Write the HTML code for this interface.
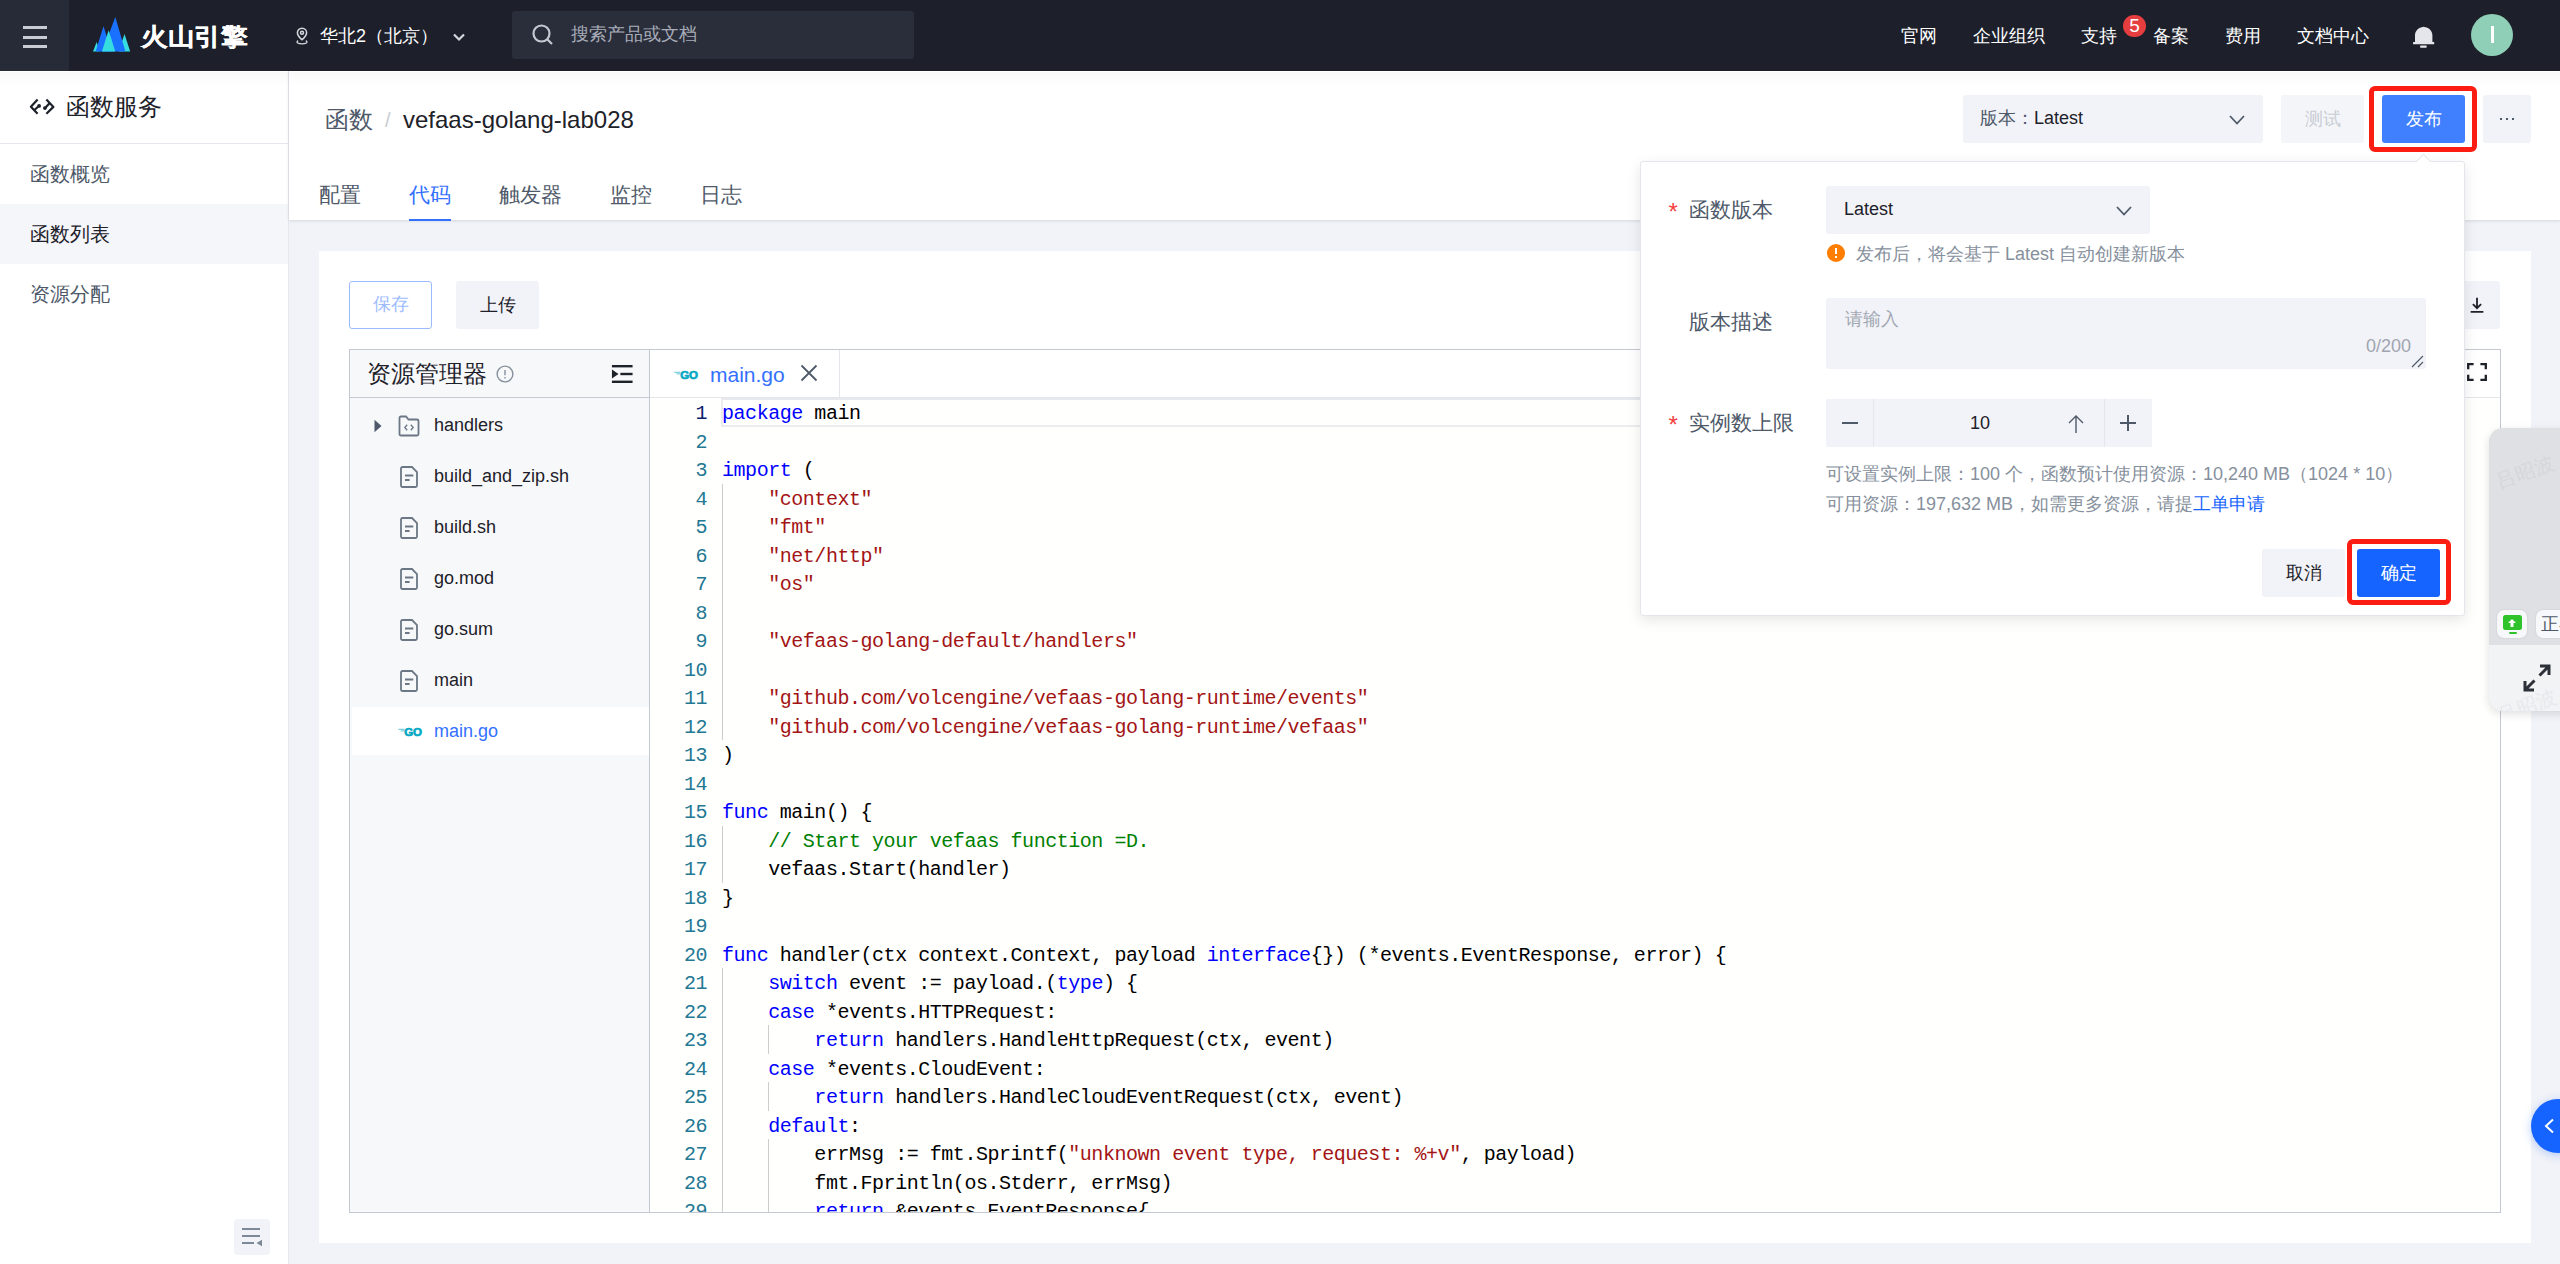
<!DOCTYPE html>
<html lang="zh">
<head>
<meta charset="utf-8">
<title>vefaas</title>
<style>
*{box-sizing:border-box;margin:0;padding:0}
html,body{width:2560px;height:1264px;overflow:hidden;background:#f2f3f8;font-family:"Liberation Sans",sans-serif;color:#1d2129}
.abs{position:absolute}
.t{position:absolute;white-space:nowrap;line-height:1}
/* header */
#hdr{position:absolute;left:0;top:0;width:2560px;height:71px;background:#1d202b}
#ham{position:absolute;left:0;top:0;width:69px;height:71px;background:#272b38}
#ham i{position:absolute;left:23px;width:24px;height:3px;background:#c9cbd3}
.nav{color:#fff;font-size:18px;top:27px;margin-left:1px}
#search{position:absolute;left:512px;top:11px;width:402px;height:48px;background:#2a2e3b;border-radius:3px}
/* sidebar */
#side{position:absolute;left:0;top:71px;width:289px;height:1193px;background:#fff;border-right:1px solid #e5e7ee}
.mi{position:absolute;left:0;width:288px;height:60px;font-size:19.500px;color:#4e5969;line-height:60px;padding-left:30px}
/* main */
#phead{position:absolute;left:289px;top:71px;width:2271px;height:149px;background:#fff;box-shadow:0 1px 3px rgba(0,0,0,.12)}
.tab{font-size:21px;color:#4e5969;top:184px}
#card{position:absolute;left:319px;top:251px;width:2212px;height:992px;background:#fff}
.btn{position:absolute;height:48px;border-radius:3px;font-size:18px;text-align:center;line-height:48px}
#ed{position:absolute;left:349px;top:349px;width:2152px;height:864px;border:1px solid #c4c8d2;background:#fff;overflow:hidden}

#exp{position:absolute;left:0;top:0;width:300px;height:862px;background:#f7f8fa;border-right:1px solid #c4c8d2}
.row{position:absolute;left:0;width:299px;height:51px}
.row .n{position:absolute;left:84px;top:16px;font-size:18px;line-height:1;color:#1d2129;white-space:nowrap}
.row svg{position:absolute}
#code{position:absolute;left:300px;top:48px;width:1852px;height:816px;background:#fffffe;overflow:hidden;font-family:"Liberation Mono",monospace;font-size:20px;letter-spacing:-0.460px;color:#000}
.ln{margin-top:2px;position:absolute;left:0;width:57px;text-align:right;color:#237893;height:28.500px;line-height:28.500px;white-space:pre}
.cl{margin-top:2px;position:absolute;left:72px;height:28.500px;line-height:28.500px;white-space:pre}
.k{color:#0000ff}.s{color:#a31515}.c{color:#008000}
.g{position:absolute;width:1px;background:#cdcdcd}

#pop{position:absolute;left:1640px;top:161px;width:825px;height:455px;background:#fff;border:1px solid #e5e6eb;border-radius:3px;box-shadow:0 4px 14px rgba(0,0,0,.10)}
#pop .lb{position:absolute;left:48px;margin-top:-1px;font-size:21px;line-height:1;color:#4e5969;white-space:nowrap}
#pop .ast{position:absolute;left:27.500px;font-size:24px;line-height:1;color:#f53f3f}
#pop .fld{position:absolute;background:#f2f3f8;border-radius:3px}
#pop .hp{position:absolute;left:185px;font-size:18px;line-height:1;color:#86909c;white-space:nowrap}
</style>
</head>
<body>
<!-- HEADER -->
<div id="hdr">
  <div id="ham"><i style="top:26px"></i><i style="top:35.500px"></i><i style="top:45px"></i></div>
  <svg class="abs" style="left:90px;top:14px" width="44" height="40" viewBox="90 14 44 40">
    <polygon points="124.5,34 118.5,51.4 130.2,51.4" fill="#35dce0"/>
    <polygon points="96.7,42 93,51.4 99.6,51.4" fill="#35dce0"/>
    <polygon points="103.5,26.2 95.6,51.4 111.4,51.4" fill="#1a71ff"/>
    <polygon points="115.3,16.9 102.4,51.4 125.4,51.4" fill="#1a71ff"/>
    <polygon points="108.6,30.3 101.9,51.4 115.3,51.4" fill="#35dce0"/>
  </svg>
  <div class="t" id="logo" style="left:141px;top:22px;font-size:27px;font-weight:bold;color:#fff;letter-spacing:-0.3px;transform:scaleY(0.9);transform-origin:50% 100%;-webkit-text-stroke:0.3px #fff">火山引擎</div>
  <svg class="abs" style="left:293px;top:26px" width="18" height="20" viewBox="0 0 18 20" fill="none" stroke="#d5d7de" stroke-width="1.5">
    <path d="M9 2.2c-2.6 0-4.6 2-4.6 4.5 0 2.9 3 5.6 4.6 7.1 1.600-1.500 4.600-4.200 4.600-7.100C13.600 4.200 11.600 2.200 9 2.200z"/>
    <circle cx="9" cy="6.800" r="1.500"/>
    <path d="M5.200 14.600c-0.800 0.400-1.200 0.900-1.200 1.400 0 1 2.200 1.800 5 1.800s5-0.800 5-1.800c0-0.500-0.400-1-1.200-1.400" stroke-width="1.300"/>
  </svg>
  <div class="t nav" style="left:319px;">华北2（北京）</div>
  <svg class="abs" style="left:451px;top:31px" width="16" height="12" viewBox="0 0 16 12" fill="none" stroke="#d5d7de" stroke-width="2.200"><path d="M3 3.500l5 5 5-5"/></svg>
  <div id="search">
    <svg class="abs" style="left:18px;top:11px" width="26" height="26" viewBox="0 0 26 26" fill="none" stroke="#c5c8d0" stroke-width="2.200"><circle cx="11.500" cy="11.500" r="8"/><path d="M17.500 17.500l4.500 4.500"/></svg>
    <div class="t" style="left:59px;top:14px;font-size:18px;color:#a8acb8">搜索产品或文档</div>
  </div>
  <div class="t nav" style="left:1900px">官网</div>
  <div class="t nav" style="left:1972px">企业组织</div>
  <div class="t nav" style="left:2080px">支持</div>
  <div class="abs" style="left:2123px;top:15px;width:23px;height:22px;border-radius:11px;background:#e63e3e;color:#fff;font-size:19px;line-height:22.500px;text-align:center">5</div>
  <div class="t nav" style="left:2152px">备案</div>
  <div class="t nav" style="left:2224px">费用</div>
  <div class="t nav" style="left:2296px">文档中心</div>
  <svg class="abs" style="left:2411px;top:24px" width="26" height="26" viewBox="0 0 26 26"><g fill="#e5e6eb"><path d="M4 18.200V11.500C4 6.800 7.600 3.900 11 3.300Q12.700 2 14.400 3.300C17.800 3.900 21.400 6.800 21.400 11.500V18.200Z"/><rect x="2" y="18" width="21.200" height="2.200" rx="0.500"/><rect x="9" y="21.600" width="6.800" height="2.100" rx="1"/></g></svg>
  <div class="abs" style="left:2470.700px;top:13.700px;width:42.400px;height:42.400px;border-radius:21.200px;background:#8fcfb7"></div>
  <div class="abs" style="left:2490.800px;top:26.200px;width:3px;height:16.700px;background:#fff"></div>
</div>
<!-- SIDEBAR -->
<div id="side">
  <svg class="abs" style="left:24px;top:21px" width="40" height="30" viewBox="0 0 40 30" fill="none" stroke="#1d2129" stroke-width="2.200" stroke-linejoin="round"><path d="M13.600 7.600L6.900 14.700l6.700 7.100"/><path d="M10.700 17.800L14.600 14.300"/><circle cx="15.100" cy="13.900" r="1.900" fill="#1d2129" stroke="none"/><path d="M22.400 7.600L29.400 14.900l-7 6.900"/><path d="M25.500 11.200L21.400 15.700"/><circle cx="20.900" cy="16.100" r="1.900" fill="#1d2129" stroke="none"/></svg>
  <div class="t" style="left:66px;top:24px;font-size:24px;color:#1d2129">函数服务</div>
  <div class="abs" style="left:0;top:72px;width:288px;height:1px;background:#e5e7ee"></div>
  <div class="mi" style="top:73px">函数概览</div>
  <div class="mi" style="top:133px;background:#f5f6fa;color:#1d2129">函数列表</div>
  <div class="mi" style="top:193px">资源分配</div>
  <div class="abs" style="left:234px;top:1148px;width:36px;height:36px;border-radius:4px;background:#f2f3f8"></div>
  <svg class="abs" style="left:234px;top:1148px" width="36" height="36" viewBox="0 0 36 36"><g fill="#7d8998"><rect x="8" y="9" width="18" height="2"/><rect x="8" y="16" width="18" height="2"/><rect x="8" y="23" width="12" height="2"/><polygon points="22.500,24 28,20.800 28,27.200"/></g></svg>
</div>
<!-- PAGE HEAD -->
<div id="phead">
  <div class="t" style="left:36px;top:37px;font-size:24px;color:#4e5969">函数</div>
  <div class="t" style="left:96px;top:39px;font-size:20px;color:#c9cdd4">/</div>
  <div class="t" style="left:114px;top:37px;font-size:24px;color:#1d2129">vefaas-golang-lab028</div>
  <div class="t tab" style="left:30px;top:113px">配置</div>
  <div class="t tab" style="left:120px;top:113px;color:#3370ff">代码</div>
  <div class="t tab" style="left:210px;top:113px">触发器</div>
  <div class="t tab" style="left:321px;top:113px">监控</div>
  <div class="t tab" style="left:411px;top:113px">日志</div>
  <div class="abs" style="left:120px;top:148px;width:42px;height:2px;background:#3370ff"></div>
  <!-- version select -->
  <div class="abs" style="left:1674px;top:24px;width:300px;height:48px;background:#f2f3f8;border-radius:3px"></div>
  <div class="t" style="left:1691px;top:38px;font-size:18px;color:#4e5969">版本：<span style="color:#1d2129">Latest</span></div>
  <svg class="abs" style="left:1939px;top:43px" width="18" height="12" viewBox="0 0 18 12" fill="none" stroke="#4e5969" stroke-width="1.800"><path d="M2 2l7 7.500 7-7.500"/></svg>
  <div class="btn" style="left:1992px;top:24px;width:83px;background:#f4f5f9;color:#c9cdd4">测试</div>
  <div class="btn" style="left:2093px;top:24px;width:83px;background:#4080ff;color:#fff">发布</div>
  <div class="btn" style="left:2194px;top:24px;width:48px;background:#f2f3f8"></div>
  <div class="abs" style="left:2211px;top:46.500px;width:2.400px;height:2.400px;background:#4e5969;box-shadow:6px 0 0 #4e5969,12px 0 0 #4e5969"></div>
  <div class="abs" style="left:2080px;top:15px;width:108px;height:66px;border:5px solid #fb1d12;border-radius:6px"></div>
</div>
<!-- CARD -->
<div id="card">
  <div class="btn" style="left:30px;top:30px;width:83px;border:1.500px solid #9dbcff;color:#9dbcff;line-height:45px">保存</div>
  <div class="btn" style="left:137px;top:30px;width:83px;background:#f2f3f8;color:#1d2129">上传</div>
  <div class="btn" style="left:2133px;top:30px;width:48px;background:#f2f3f8"></div>
  <svg class="abs" style="left:2148px;top:43.500px" width="20" height="20" viewBox="0 0 22 22" fill="none" stroke="#1d2129" stroke-width="2"><path d="M11 3v11M6.500 10l4.500 4.500 4.500-4.500M4 18.500h14"/></svg>
</div>
<div id="ed">
<div id="exp">
  <div class="abs" style="left:0;top:0;width:299px;height:48px;border-bottom:1px solid #c4c8d2"></div>
  <div class="t" style="left:17px;top:11.500px;font-size:24px;color:#1d2129">资源管理器</div>
  <svg class="abs" style="left:145.500px;top:15px" width="18" height="18" viewBox="0 0 18 18" fill="none" stroke="#86909c" stroke-width="1.400"><circle cx="9" cy="9" r="7.900"/><path d="M9 5v5.200M9 12v1.500"/></svg>
  <svg class="abs" style="left:260.800px;top:14px" width="22.500" height="20" viewBox="0 0 24 20" preserveAspectRatio="none"><g fill="#1d2129"><rect x="1" y="1" width="22" height="2.400"/><rect x="10" y="8.800" width="13" height="2.400"/><rect x="1" y="16.600" width="22" height="2.400"/><polygon points="1,5.500 8,10 1,14.500"/></g></svg>
  <div class="row" style="top:50px"><svg style="left:24px;top:19px" width="8" height="14" viewBox="0 0 8 14"><polygon points="0.500,0.800 7.500,7 0.500,13.200" fill="#4e5969"/></svg><svg style="left:47px;top:14px" width="24" height="24" viewBox="0 0 24 24" fill="none" stroke="#6b7785" stroke-width="1.800"><path d="M2.500 4a1.500 1.500 0 0 1 1.500-1.500h5l2.500 3H20a1.500 1.500 0 0 1 1.500 1.500v13a1.500 1.500 0 0 1-1.500 1.500H4a1.500 1.500 0 0 1-1.500-1.500z"/><path d="M10.200 10.800L7.800 13.500l2.400 2.700M13.800 10.800l2.400 2.700-2.400 2.700" stroke-width="1.300"/></svg><div class="n">handlers</div></div><div class="row" style="top:101px"><svg style="left:48px;top:14px" width="22" height="24" viewBox="0 0 22 24" fill="none" stroke="#6b7785" stroke-width="1.800"><path d="M3 3.500a1.500 1.500 0 0 1 1.500-1.500H14l5 5v13.500a1.500 1.500 0 0 1-1.500 1.500h-13A1.500 1.500 0 0 1 3 20.500z"/><path d="M7 10.500h8.300M7 15h4.600"/></svg><div class="n">build_and_zip.sh</div></div><div class="row" style="top:152px"><svg style="left:48px;top:14px" width="22" height="24" viewBox="0 0 22 24" fill="none" stroke="#6b7785" stroke-width="1.800"><path d="M3 3.500a1.500 1.500 0 0 1 1.500-1.500H14l5 5v13.500a1.500 1.500 0 0 1-1.500 1.500h-13A1.500 1.500 0 0 1 3 20.500z"/><path d="M7 10.500h8.300M7 15h4.600"/></svg><div class="n">build.sh</div></div><div class="row" style="top:203px"><svg style="left:48px;top:14px" width="22" height="24" viewBox="0 0 22 24" fill="none" stroke="#6b7785" stroke-width="1.800"><path d="M3 3.500a1.500 1.500 0 0 1 1.500-1.500H14l5 5v13.500a1.500 1.500 0 0 1-1.500 1.500h-13A1.500 1.500 0 0 1 3 20.500z"/><path d="M7 10.500h8.300M7 15h4.600"/></svg><div class="n">go.mod</div></div><div class="row" style="top:254px"><svg style="left:48px;top:14px" width="22" height="24" viewBox="0 0 22 24" fill="none" stroke="#6b7785" stroke-width="1.800"><path d="M3 3.500a1.500 1.500 0 0 1 1.500-1.500H14l5 5v13.500a1.500 1.500 0 0 1-1.500 1.500h-13A1.500 1.500 0 0 1 3 20.500z"/><path d="M7 10.500h8.300M7 15h4.600"/></svg><div class="n">go.sum</div></div><div class="row" style="top:305px"><svg style="left:48px;top:14px" width="22" height="24" viewBox="0 0 22 24" fill="none" stroke="#6b7785" stroke-width="1.800"><path d="M3 3.500a1.500 1.500 0 0 1 1.500-1.500H14l5 5v13.500a1.500 1.500 0 0 1-1.500 1.500h-13A1.500 1.500 0 0 1 3 20.500z"/><path d="M7 10.500h8.300M7 15h4.600"/></svg><div class="n">main</div></div><div class="row" style="left:2px;width:297px;top:357px;height:48px;background:#fff"><svg style="position:absolute;left:46px;top:18px" width="26" height="12" viewBox="0 0 26 12"><text x="6.200" y="11" font-family="Liberation Sans, sans-serif" font-size="11.500" font-weight="bold" fill="#00a8c4" stroke="#00a8c4" stroke-width="0.650" letter-spacing="-0.200">GO</text><path d="M0.400 4.300h6M2.700 5.900h3.700" stroke="#00a8c4" stroke-width="0.800" opacity="0.800"/></svg><div class="n" style="left:82px;top:15px;color:#3370ff">main.go</div></div>
</div>
<div class="abs" style="left:300px;top:0;width:1852px;height:48px;background:#fff;border-bottom:1px solid #e5e6eb"></div>
<div class="abs" style="left:300px;top:0;width:190px;height:48px;border-right:1px solid #e5e6eb"></div>
<svg style="position:absolute;left:324px;top:18px" width="26" height="12" viewBox="0 0 26 12"><text x="6.200" y="11" font-family="Liberation Sans, sans-serif" font-size="11.500" font-weight="bold" fill="#00a8c4" stroke="#00a8c4" stroke-width="0.650" letter-spacing="-0.200">GO</text><path d="M0.400 4.300h6M2.700 5.900h3.700" stroke="#00a8c4" stroke-width="0.800" opacity="0.800"/></svg>
<div class="t" style="left:360px;top:14px;font-size:21px;color:#3370ff">main.go</div>
<svg class="abs" style="left:448.500px;top:12.500px" width="20" height="20" viewBox="0 0 20 20" fill="none" stroke="#4e5969" stroke-width="1.800"><path d="M2.500 2.500l15 15M17.500 2.500l-15 15"/></svg>
<svg class="abs" style="left:2117px;top:13px" width="20" height="18" viewBox="0 0 20 18" fill="none" stroke="#1d2129" stroke-width="2.300"><path d="M1.200 6.300V1.200H6.600M13.400 1.200H18.800V6.300M18.800 11.700V16.800H13.400M6.600 16.800H1.200V11.700"/></svg>

<div id="code">
<div class="abs" style="left:71px;top:0;width:1739px;height:29px;border:2px solid #ececee;border-top-color:#e8e9ee"></div>
<div class="g" style="left:72px;top:85.5px;height:256.5px"></div><div class="g" style="left:72px;top:427.5px;height:57.0px"></div><div class="g" style="left:72px;top:570.0px;height:256.5px"></div><div class="g" style="left:118px;top:627.0px;height:28.5px"></div><div class="g" style="left:118px;top:684.0px;height:28.5px"></div><div class="g" style="left:118px;top:741.0px;height:85.5px"></div>
<div class="ln" style="top:0.0px;color:#0b216f">1</div><div class="cl" style="top:0.0px"><span class="k">package</span> main</div><div class="ln" style="top:28.5px">2</div><div class="cl" style="top:28.5px"></div><div class="ln" style="top:57.0px">3</div><div class="cl" style="top:57.0px"><span class="k">import</span> (</div><div class="ln" style="top:85.5px">4</div><div class="cl" style="top:85.5px">    <span class="s">"context"</span></div><div class="ln" style="top:114.0px">5</div><div class="cl" style="top:114.0px">    <span class="s">"fmt"</span></div><div class="ln" style="top:142.5px">6</div><div class="cl" style="top:142.5px">    <span class="s">"net/http"</span></div><div class="ln" style="top:171.0px">7</div><div class="cl" style="top:171.0px">    <span class="s">"os"</span></div><div class="ln" style="top:199.5px">8</div><div class="cl" style="top:199.5px"></div><div class="ln" style="top:228.0px">9</div><div class="cl" style="top:228.0px">    <span class="s">"vefaas-golang-default/handlers"</span></div><div class="ln" style="top:256.5px">10</div><div class="cl" style="top:256.5px"></div><div class="ln" style="top:285.0px">11</div><div class="cl" style="top:285.0px">    <span class="s">"github.com/volcengine/vefaas-golang-runtime/events"</span></div><div class="ln" style="top:313.5px">12</div><div class="cl" style="top:313.5px">    <span class="s">"github.com/volcengine/vefaas-golang-runtime/vefaas"</span></div><div class="ln" style="top:342.0px">13</div><div class="cl" style="top:342.0px">)</div><div class="ln" style="top:370.5px">14</div><div class="cl" style="top:370.5px"></div><div class="ln" style="top:399.0px">15</div><div class="cl" style="top:399.0px"><span class="k">func</span> main() {</div><div class="ln" style="top:427.5px">16</div><div class="cl" style="top:427.5px">    <span class="c">// Start your vefaas function =D.</span></div><div class="ln" style="top:456.0px">17</div><div class="cl" style="top:456.0px">    vefaas.Start(handler)</div><div class="ln" style="top:484.5px">18</div><div class="cl" style="top:484.5px">}</div><div class="ln" style="top:513.0px">19</div><div class="cl" style="top:513.0px"></div><div class="ln" style="top:541.5px">20</div><div class="cl" style="top:541.5px"><span class="k">func</span> handler(ctx context.Context, payload <span class="k">interface</span>{}) (*events.EventResponse, error) {</div><div class="ln" style="top:570.0px">21</div><div class="cl" style="top:570.0px">    <span class="k">switch</span> event := payload.(<span class="k">type</span>) {</div><div class="ln" style="top:598.5px">22</div><div class="cl" style="top:598.5px">    <span class="k">case</span> *events.HTTPRequest:</div><div class="ln" style="top:627.0px">23</div><div class="cl" style="top:627.0px">        <span class="k">return</span> handlers.HandleHttpRequest(ctx, event)</div><div class="ln" style="top:655.5px">24</div><div class="cl" style="top:655.5px">    <span class="k">case</span> *events.CloudEvent:</div><div class="ln" style="top:684.0px">25</div><div class="cl" style="top:684.0px">        <span class="k">return</span> handlers.HandleCloudEventRequest(ctx, event)</div><div class="ln" style="top:712.5px">26</div><div class="cl" style="top:712.5px">    <span class="k">default</span>:</div><div class="ln" style="top:741.0px">27</div><div class="cl" style="top:741.0px">        errMsg := fmt.Sprintf(<span class="s">"unknown event type, request: %+v"</span>, payload)</div><div class="ln" style="top:769.5px">28</div><div class="cl" style="top:769.5px">        fmt.Fprintln(os.Stderr, errMsg)</div><div class="ln" style="top:798.0px">29</div><div class="cl" style="top:798.0px">        <span class="k">return</span> &amp;events.EventResponse{</div>
</div>
</div>
<div class="abs" style="left:0;top:72px;width:2560px;height:14px;background:linear-gradient(rgba(0,0,0,.028),rgba(0,0,0,0));pointer-events:none"></div>
<!-- POPOVER -->
<div id="pop">
  <div class="abs" style="left:777px;top:-6px;width:11px;height:11px;background:#fff;border-left:1px solid #e5e6eb;border-top:1px solid #e5e6eb;transform:rotate(45deg)"></div>
  <div class="ast" style="top:38px">*</div>
  <div class="lb" style="top:38px">函数版本</div>
  <div class="fld" style="left:185px;top:24px;width:324px;height:48px"></div>
  <div class="t" style="left:203px;top:38px;font-size:18px;color:#1d2129">Latest</div>
  <svg class="abs" style="left:474px;top:43px" width="18" height="12" viewBox="0 0 18 12" fill="none" stroke="#4e5969" stroke-width="1.800"><path d="M2 2l7 7.500 7-7.500"/></svg>
  <div class="abs" style="left:186px;top:82px;width:18px;height:18px;border-radius:9px;background:#ff7d00"></div>
  <div class="abs" style="left:194px;top:86px;width:2px;height:6px;background:#fff"></div>
  <div class="abs" style="left:194px;top:94px;width:2px;height:2px;background:#fff"></div>
  <div class="hp" style="left:215px;top:83px">发布后，将会基于 Latest 自动创建新版本</div>
  <div class="lb" style="top:149.500px">版本描述</div>
  <div class="fld" style="left:185px;top:136px;width:600px;height:71px"></div>
  <div class="t" style="left:204px;top:148px;font-size:18px;color:#a3a9b3">请输入</div>
  <div class="t" style="left:725px;top:175px;font-size:18px;color:#a0a5b0">0/200</div>
  <svg class="abs" style="left:768.500px;top:191.500px" width="14" height="14" viewBox="0 0 14 14" fill="none" stroke="#4e5969" stroke-width="1.200"><path d="M2 13L13 2M8 13l5-5"/></svg>
  <div class="ast" style="top:251px">*</div>
  <div class="lb" style="top:250.500px">实例数上限</div>
  <div class="fld" style="left:185px;top:237px;width:326px;height:47.500px;border-radius:1px"></div>
  <div class="abs" style="left:232px;top:237px;width:1px;height:47.500px;background:#e4e6ec"></div>
  <div class="abs" style="left:463px;top:237px;width:1px;height:47.500px;background:#e4e6ec"></div>
  <div class="abs" style="left:201px;top:260px;width:16px;height:1.600px;background:#4e5969"></div>
  <div class="abs" style="left:479px;top:260px;width:16px;height:1.600px;background:#4e5969"></div>
  <div class="abs" style="left:486.200px;top:253px;width:1.600px;height:16px;background:#4e5969"></div>
  <div class="t" style="left:329px;top:252px;font-size:18px;color:#1d2129">10</div>
  <svg class="abs" style="left:425px;top:251px" width="20" height="22" viewBox="0 0 20 22" fill="none" stroke="#4e5969" stroke-width="1.400"><path d="M10 20V3M3 10l7-7 7 7"/></svg>
  <div class="hp" style="top:303px">可设置实例上限：100 个，函数预计使用资源：10,240 MB（1024 * 10）</div>
  <div class="hp" style="top:333px">可用资源：197,632 MB，如需更多资源，请提<span style="color:#1664ff">工单申请</span></div>
  <div class="btn" style="left:621px;top:387px;width:83px;background:#f2f3f8;color:#1d2129">取消</div>
  <div class="btn" style="left:716px;top:387px;width:83px;background:#1664ff;color:#fff">确定</div>
  <div class="abs" style="left:706px;top:377px;width:104px;height:66px;border:5px solid #fb1d12;border-radius:6px"></div>
</div>
<!-- FLOAT WIDGET -->
<div class="abs" style="left:2489px;top:428px;width:90px;height:283px;border-radius:14px;background:#dfe0e4;box-shadow:0 3px 10px rgba(0,0,0,.13);overflow:hidden">
  <div class="abs" style="left:0;top:217px;width:90px;height:66px;background:#f2f3f5"></div>
  <div class="abs" style="left:8px;top:182px;width:30px;height:28px;border-radius:7px;background:#f7f8f9;box-shadow:0 0 2px rgba(0,0,0,.12)"></div>
  <div class="abs" style="left:14px;top:187px;width:18.500px;height:15px;border-radius:2.500px;background:#2fc32b"></div>
  <div class="abs" style="left:19.500px;top:204px;width:8px;height:1.800px;border-radius:1px;background:#2fc32b"></div>
  <svg class="abs" style="left:18px;top:190px" width="10" height="10" viewBox="0 0 10 10"><path d="M5 1L1 5h2.500v4h3V5H9z" fill="#fff"/></svg>
  <div class="abs" style="left:47px;top:182px;width:60px;height:28px;border-radius:7px;background:#f7f8f9;box-shadow:0 0 2px rgba(0,0,0,.12)"></div>
  <div class="t" style="left:52px;top:187px;font-size:18px;color:#4e5969">正在</div>
  <div class="t" style="left:6px;top:34px;font-size:20px;color:#d6d7db;transform:rotate(-20deg)">吕昭波</div><div class="t" style="left:8px;top:268px;font-size:20px;color:#e8e9ec;transform:rotate(-20deg);z-index:2">吕昭波</div><svg class="abs" style="left:33px;top:235px;z-index:3" width="30" height="30" viewBox="0 0 30 30" fill="none" stroke="#2c3038" stroke-width="3"><path d="M18 3h9v9M27 3L17.500 12.500M12 27H3v-9M3 27l9.500-9.500"/></svg>
</div>
<!-- BLUE HALF CIRCLE -->
<div class="abs" style="left:2531px;top:1099px;width:54px;height:54px;border-radius:27px;background:#1664ff;box-shadow:0 2px 10px rgba(22,100,255,.3)"></div>
<svg class="abs" style="left:2543px;top:1118px" width="12" height="16" viewBox="0 0 12 16" fill="none" stroke="#fff" stroke-width="2"><path d="M10 1.500L3 8l7 6.500"/></svg>
</body>
</html>
